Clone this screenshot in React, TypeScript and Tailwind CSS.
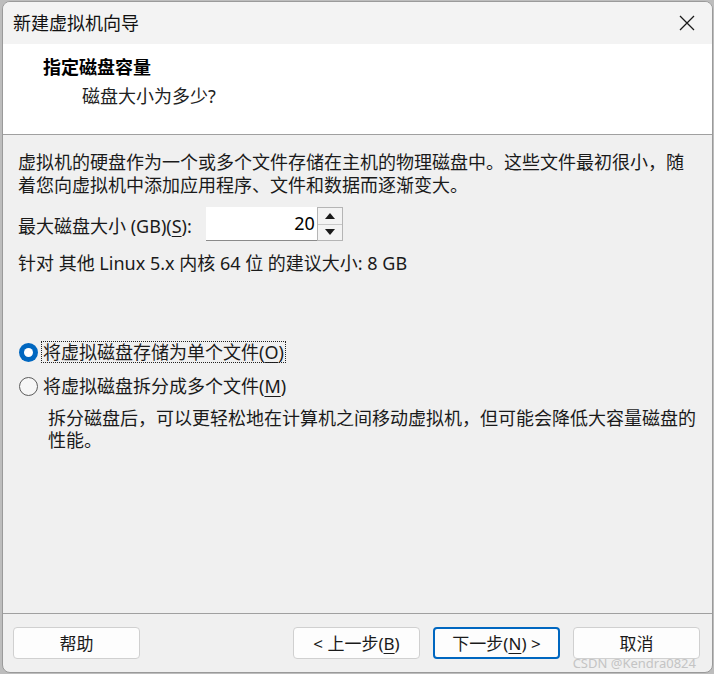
import React from 'react';

const FONT = { fontFamily: '"Noto Sans", "Noto Sans CJK SC", sans-serif' };

function Btn({ children, primary }: { children: React.ReactNode; primary?: boolean }) {
    return (
        <button
            className={`w-[127px] h-[32px] rounded-[4px] bg-[#fdfdfd] text-[17px] leading-none text-[#1a1a1a] flex items-center justify-center ${primary ? 'border-2 border-[#0067c0]' : 'border border-[#d0d0d0]'}`}
        >
            {children}
        </button>
    );
}

function Radio({ checked }: { checked?: boolean }) {
    if (checked) {
        return (
            <span className="w-[19px] h-[19px] rounded-full bg-[#0067c0] flex items-center justify-center shrink-0">
                <span className="w-[9px] h-[9px] rounded-full bg-white" />
            </span>
        );
    }
    return <span className="w-[19px] h-[19px] rounded-full border border-[#5c5c5c] bg-[#f6f6f6] shrink-0" />;
}

export default function App() {
    return (
        <div className="w-[714px] h-[674px] bg-[#bdbdbd] pt-[1px] pl-[2px]" style={FONT}>
            <div className="relative w-[711px] h-[672px] border border-[#9a9a9a] rounded-[8px] overflow-hidden bg-[#f0f0f0] flex flex-col text-[#1a1a1a]">
                {/* Title bar */}
                <div className="h-[42px] bg-[#f3f3f3] flex items-center justify-between pl-[10px] pr-[17px] shrink-0">
                    <span className="text-[18px] leading-none text-[#111]">新建虚拟机向导</span>
                    <svg width="16" height="16" viewBox="0 0 16 16" className="text-[#1a1a1a]">
                        <path d="M1 1 L15 15 M15 1 L1 15" stroke="currentColor" strokeWidth="1.3" fill="none" />
                    </svg>
                </div>

                {/* Header */}
                <div className="h-[91px] bg-white border-b border-[#a0a0a0] pt-[11px] shrink-0">
                    <div className="pl-[40px] text-[18px] leading-[24px] font-bold text-black">指定磁盘容量</div>
                    <div className="pl-[79px] mt-[5px] text-[18px] leading-[24px] text-[#222]">磁盘大小为多少?</div>
                </div>

                {/* Body */}
                <div className="flex-1 px-[15px] pt-[16px] text-[18px]">
                    <p className="leading-[23px]">
                        虚拟机的硬盘作为一个或多个文件存储在主机的物理磁盘中。这些文件最初很小，随
                        <br />
                        着您向虚拟机中添加应用程序、文件和数据而逐渐变大。
                    </p>

                    <div className="mt-[10px] flex items-center h-[34px]">
                        <span className="leading-none pt-[4px]">
                            最大磁盘大小 (GB)(<span className="underline underline-offset-[3px]">S</span>):
                        </span>
                        <div className="ml-[14px] flex h-[34px]">
                            <div className="w-[111px] h-[34px] bg-white border-b border-[#8a8a8a] flex items-center justify-end pr-[2px] text-[18px] text-black">
                                20
                            </div>
                            <div className="w-[26px] h-[34px] border border-[#b5b5b5] bg-[#f3f3f3] flex flex-col">
                                <div className="flex-1 flex items-center justify-center border-b border-[#c8c8c8]">
                                    <svg width="10" height="6" viewBox="0 0 10 6"><path d="M0 6 L5 0 L10 6 Z" fill="#1a1a1a" /></svg>
                                </div>
                                <div className="flex-1 flex items-center justify-center">
                                    <svg width="10" height="6" viewBox="0 0 10 6"><path d="M0 0 L5 6 L10 0 Z" fill="#1a1a1a" /></svg>
                                </div>
                            </div>
                        </div>
                    </div>

                    <p className="mt-[11px] leading-[23px]">针对 其他 Linux 5.x 内核 64 位 的建议大小: 8 GB</p>

                    <div className="mt-[66px] flex items-center gap-[4px] h-[22px] pl-[1px]">
                        <Radio checked />
                        <span className="leading-[20px] px-[1px] outline outline-1 outline-dotted outline-[#222]">
                            将虚拟磁盘存储为单个文件(<span className="underline underline-offset-[3px]">O</span>)
                        </span>
                    </div>

                    <div className="mt-[12px] flex items-center gap-[4px] h-[22px] pl-[1px]">
                        <Radio />
                        <span className="leading-[20px] px-[1px]">
                            将虚拟磁盘拆分成多个文件(<span className="underline underline-offset-[3px]">M</span>)
                        </span>
                    </div>

                    <p className="mt-[10px] pl-[30px] leading-[22px]">
                        拆分磁盘后，可以更轻松地在计算机之间移动虚拟机，但可能会降低大容量磁盘的
                        <br />
                        性能。
                    </p>
                </div>

                {/* Footer */}
                <div className="h-[59px] border-t border-[#a0a0a0] pt-[13px] pl-[10px] pr-[12px] flex items-start justify-between shrink-0">
                    <Btn>帮助</Btn>
                    <div className="flex gap-[13px]">
                        <Btn>&lt; 上一步(<span className="underline underline-offset-[3px]">B</span>)</Btn>
                        <Btn primary>下一步(<span className="underline underline-offset-[3px]">N</span>) &gt;</Btn>
                        <Btn>取消</Btn>
                    </div>
                </div>

                {/* Watermark */}
                <span className="absolute right-[16px] bottom-[2px] text-[13px] leading-none text-[#c4c4c4] pointer-events-none">
                    CSDN @Kendra0824
                </span>
            </div>
        </div>
    );
}
